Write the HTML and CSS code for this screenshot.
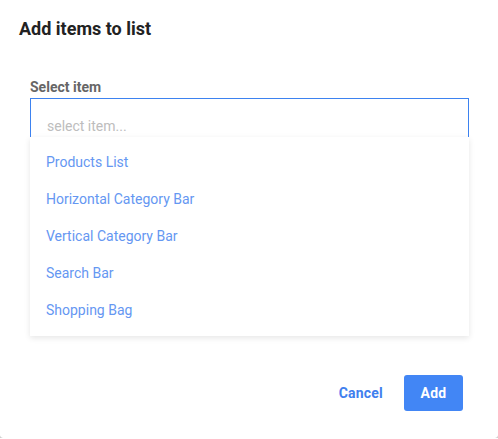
FILE: index.html
```html
<!DOCTYPE html>
<html>
<head>
<meta charset="utf-8">
<link rel="stylesheet" href="styles.css">
</head>
<body>
<div class="dialog">
  <h1 class="title">Add items to list</h1>
  <div class="field">
    <label class="label">Select item</label>
    <div class="select">
      <div class="input">select item...</div>
      <ul class="menu">
        <li class="option">Products List</li>
        <li class="option">Horizontal Category Bar</li>
        <li class="option">Vertical Category Bar</li>
        <li class="option">Search Bar</li>
        <li class="option">Shopping Bag</li>
      </ul>
    </div>
  </div>
  <div class="actions">
    <button class="btn btn-text">Cancel</button>
    <button class="btn btn-primary">Add</button>
  </div>
</div>
</body>
</html>
```
FILE: styles.css
```css
* { box-sizing: border-box; }
html, body { margin: 0; padding: 0; background: #fff; }
body { font-family: Roboto, "Noto Sans", sans-serif; }
.dialog {
  width: 498px;
  height: 438px;
  background: #fff;
  border-radius: 0 0 3px 3px;
  box-shadow: 0 1px 1px rgba(0,0,0,0.35);
  padding: 17px 30px 0 19px;
  display: flex;
  flex-direction: column;
}
.title {
  margin: 0;
  font-size: 18px;
  font-weight: 700;
  color: #222;
  line-height: 24px;
}
.field {
  margin-top: 38px;
  margin-left: 11px;
  display: flex;
  flex-direction: column;
}
.label {
  font-size: 14px;
  font-weight: 700;
  color: #666;
  line-height: 16px;
  margin-bottom: 3px;
}
.select { width: 439px; }
.input {
  height: 39px;
  border: 1px solid #3d82f0;
  border-bottom: none;
  padding: 19px 0 0 16px;
  font-size: 14px;
  color: #bdbdbd;
  line-height: 16px;
}
.menu {
  list-style: none;
  margin: 0;
  padding: 7px 0 7px;
  background: #fff;
  box-shadow: 0 2px 6px rgba(0,0,0,0.10);
}
.option {
  height: 37px;
  line-height: 37px;
  padding-left: 16px;
  font-size: 14px;
  color: #6597f2;
}
.actions {
  margin-top: 39px;
  display: flex;
  justify-content: flex-end;
  align-items: center;
  gap: 21px;
  padding-right: 5px;
}
.btn {
  font-family: Roboto, "Noto Sans", sans-serif;
  font-size: 14px;
  font-weight: 700;
  letter-spacing: 0.2px;
  border: none;
  cursor: pointer;
}
.btn-text {
  background: none;
  color: #3f80ee;
  padding: 0;
}
.btn-primary {
  width: 59px;
  height: 36px;
  background: #4286f5;
  color: #fff;
  border-radius: 3px;
}
```
